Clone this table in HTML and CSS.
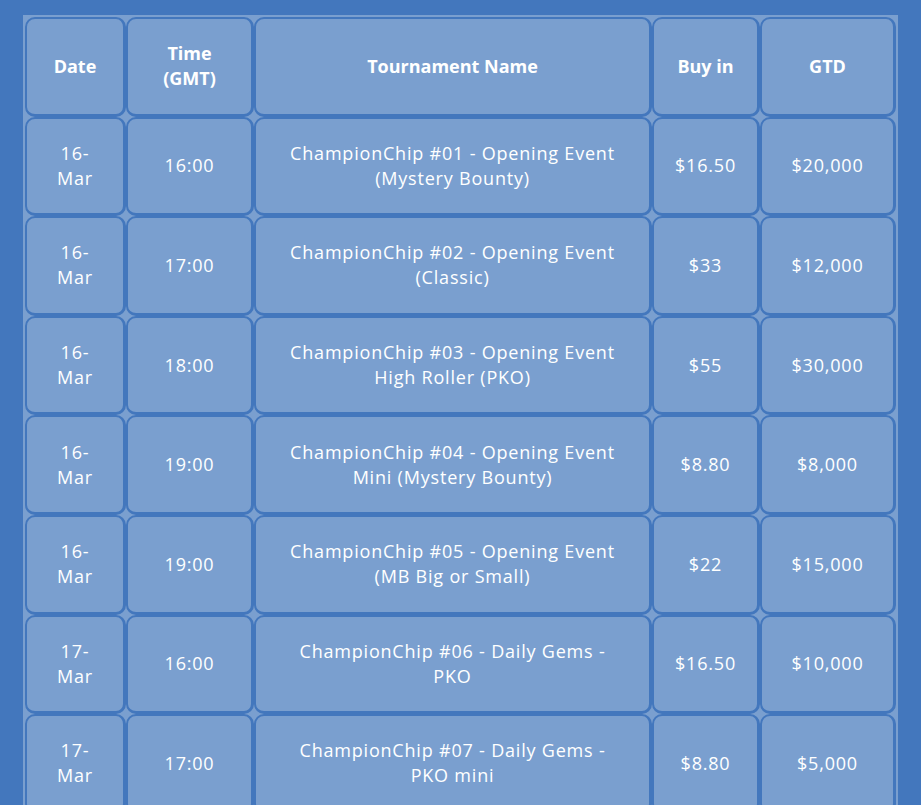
FILE: index.html
```html
<!DOCTYPE html>
<html lang="en">
<head>
<meta charset="utf-8">
<title>ChampionChip Schedule</title>
<link rel="stylesheet" href="styles.css">
</head>
<body>
<div class="page">
  <table class="schedule">
    <colgroup>
      <col class="c-date">
      <col class="c-time">
      <col class="c-name">
      <col class="c-buy">
      <col class="c-gtd">
    </colgroup>
    <thead>
      <tr>
        <th class="date">Date</th>
        <th class="time">Time (GMT)</th>
        <th>Tournament Name</th>
        <th class="num">Buy in</th>
        <th class="num">GTD</th>
      </tr>
    </thead>
    <tbody>
      <tr><td class="date">16-Mar</td><td>16:00</td><td class="name">ChampionChip #01 - Opening Event (Mystery Bounty)</td><td class="num">$16.50</td><td class="num">$20,000</td></tr>
      <tr><td class="date">16-Mar</td><td>17:00</td><td class="name">ChampionChip #02 - Opening Event (Classic)</td><td class="num">$33</td><td class="num">$12,000</td></tr>
      <tr><td class="date">16-Mar</td><td>18:00</td><td class="name">ChampionChip #03 - Opening Event High Roller (PKO)</td><td class="num">$55</td><td class="num">$30,000</td></tr>
      <tr><td class="date">16-Mar</td><td>19:00</td><td class="name">ChampionChip #04 - Opening Event Mini (Mystery Bounty)</td><td class="num">$8.80</td><td class="num">$8,000</td></tr>
      <tr><td class="date">16-Mar</td><td>19:00</td><td class="name">ChampionChip #05 - Opening Event (MB Big or Small)</td><td class="num">$22</td><td class="num">$15,000</td></tr>
      <tr><td class="date">17-Mar</td><td>16:00</td><td class="name">ChampionChip #06 - Daily Gems - PKO</td><td class="num">$16.50</td><td class="num">$10,000</td></tr>
      <tr><td class="date">17-Mar</td><td>17:00</td><td class="name">ChampionChip #07 - Daily Gems - PKO mini</td><td class="num">$8.80</td><td class="num">$5,000</td></tr>
    </tbody>
  </table>
</div>
</body>
</html>
```
FILE: styles.css
```css
html, body {
  margin: 0;
  padding: 0;
  background: #4377bd;
}
.page {
  padding-top: 15px;
  display: flex;
  justify-content: center;
}
.schedule {
  width: 875px;
  table-layout: fixed;
  border-collapse: separate;
  border-spacing: 0;
  background: #7a9fcf;
  border: 2px solid #7a9fcf;
  font-family: "Open Sans", "Liberation Sans", sans-serif;
  font-size: 18px;
  line-height: 25px;
  letter-spacing: 0.8px;
  color: #ffffff;
}
.c-date { width: 101px; }
.c-time { width: 128px; }
.c-name { width: 398px; }
.c-buy { width: 108px; }
.c-gtd { width: 136px; }
.schedule tr {
  height: 99.6px;
}
.schedule th,
.schedule td {
  background: #7a9fcf;
  border-style: solid;
  border-color: #4377bd;
  border-width: 2px 3px 3px 2px;
  border-radius: 10px;
  text-align: center;
  vertical-align: middle;
  padding: 0 24px;
}
.schedule th {
  font-weight: 700;
  letter-spacing: 0;
}
.schedule .date {
  padding: 0 24px;
}
.schedule .time {
  padding: 0 16px;
}
.schedule .num {
  padding: 0 4px;
  white-space: nowrap;
}
.schedule .name {
  padding: 0 30px;
}
```
